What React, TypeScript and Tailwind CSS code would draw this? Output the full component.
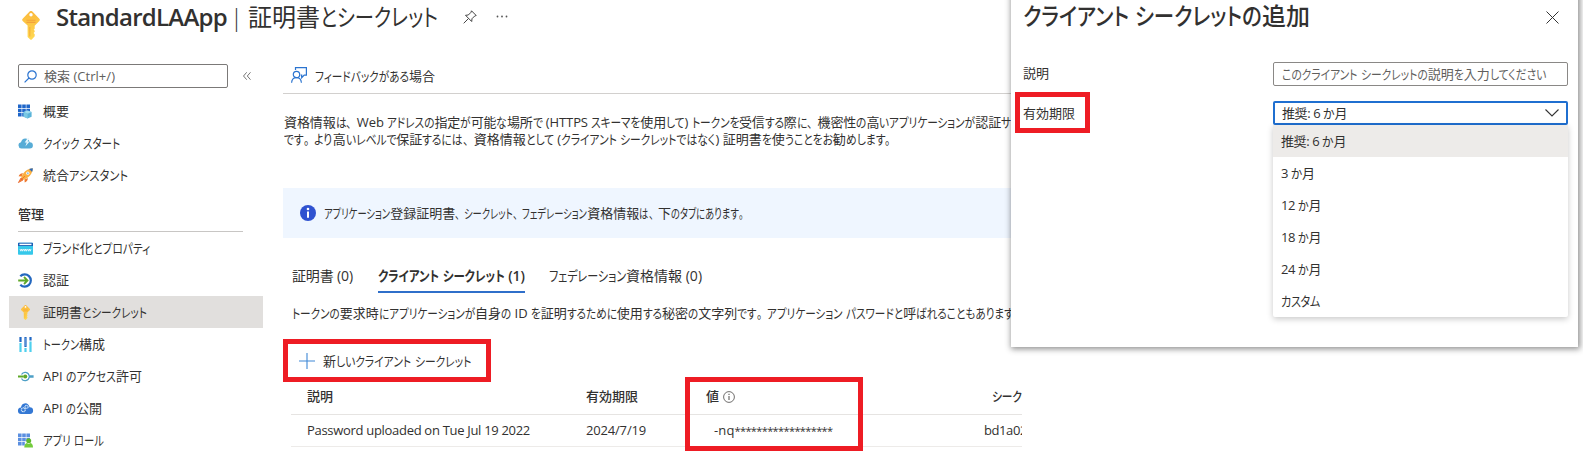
import { useLayoutEffect, useRef } from "react";
import type { ReactNode } from "react";
import clsx from "clsx";

const KANA = /([\u3001\u3002]|[\u3040-\u30ff]+)/;

/** One line of text set to a given width: kana are condensed, other scripts are tracked. */
function T({ w, children, className }: { w: number; children: string; className?: string }) {
  const ref = useRef<HTMLSpanElement>(null);
  useLayoutEffect(() => {
    const el = ref.current;
    if (!el) return;
    const kana = Array.from(el.querySelectorAll<HTMLElement>("[data-kana]"));
    kana.forEach((k) => {
      k.style.transform = "";
      k.style.marginRight = "";
    });
    el.style.letterSpacing = "";
    const total = el.getBoundingClientRect().width;
    const widths = kana.map((k) => k.getBoundingClientRect().width);
    const sum = widths.reduce((a, b) => a + b, 0);
    if (sum > 0) {
      const s = (w - (total - sum)) / sum;
      kana.forEach((k, i) => {
        k.style.transform = `scaleX(${s})`;
        k.style.marginRight = `${-(1 - s) * widths[i]}px`;
      });
    } else {
      el.style.letterSpacing = `${(w - total) / children.length}px`;
    }
  }, [w, children]);
  return (
    <span ref={ref} className={clsx("inline-block shrink-0 whitespace-pre", className)}>
      {children.split(KANA).map((part, i) =>
        i % 2 ? (
          <span
            key={i}
            data-kana
            className={clsx("inline-block origin-left", !/[\u3001\u3002]/.test(part) && "[font-feature-settings:'palt']")}
          >
            {part}
          </span>
        ) : (
          part
        ),
      )}
    </span>
  );
}

function KeyIcon({ className }: { className: string }) {
  return (
    <svg viewBox="0 0 18 29" className={className}>
      <defs>
        <linearGradient id="key" x1="0" y1="0" x2="0" y2="1">
          <stop offset="0" stopColor="#fbb93a" />
          <stop offset="1" stopColor="#ffd953" />
        </linearGradient>
      </defs>
      <path
        d="M7.6.6a2 2 0 0 1 2.8 0l6.7 6.8a2 2 0 0 1 0 2.9L12.700 14.700v3l-1 1 1 1.100v1l-1.100 1.200 1.100 1.200v2L9.800 28.400a1.100 1.100 0 0 1-1.600 0L5.600 26V14.600L.9 10.300a2 2 0 0 1 0-2.900Z"
        fill="url(#key)"
      />
      <circle cx="9" cy="3.800" r="1.700" fill="#fff" />
      <path d="M4.500 9.200h9M4.500 11.400h9" stroke="#f3a23c" strokeWidth="1.100" />
      <path d="M7.800 16v9.500" stroke="#f5ab38" strokeWidth="1" />
    </svg>
  );
}

const ic = "size-[15px] shrink-0 overflow-visible";

const OverviewIcon = () => (
  <svg viewBox="0 0 15 15" className={ic}>
    <path d="M0 .5h3.600v3.600H0zM4.200.5h3.600v3.600H4.200zM8.400.5H12v3.600H8.400zM0 4.700h3.600v3.600H0zM4.200 4.700h3.600v3.600H4.200zM8.400 4.700H12v3.600H8.400zM0 8.900h3.600v3.600H0zM4.200 8.900h2v3.600h-2z" fill="#1f66c9" />
    <path d="M9.600 6.500 13.600 8v4.800l-4 1.700-4-1.700V8z" fill="#5ab4d9" />
    <path d="m9.600 6.500 4 1.500-4 1.700-4-1.700z" fill="#9edcf0" />
    <path d="M9.600 9.700v4.800l-4-1.700V8z" fill="#7ac8e4" />
  </svg>
);
const QuickIcon = () => (
  <svg viewBox="0 0 15 15" className={ic}>
    <path d="M3.300 12.600A3.200 3.200 0 0 1 3 6.300 4.800 4.800 0 0 1 7.300 2.600c2.300 0 3.900 1.400 4.300 3.600A3.200 3.200 0 0 1 11.800 12.600z" fill="#57acd6" />
    <path d="m9.700 2-3 4.600h2L7.400 10.600l4.200-5.100H9.500L11.300 2z" fill="#e9f7fd" />
  </svg>
);
const RocketIcon = () => (
  <svg viewBox="0 0 15 15" className={ic}>
    <path d="M5 5.200C3 5 1.500 6.200.6 8.300l3 .2zM9.800 10c.2 2-1 3.600-3.100 4.500L6.500 11.400z" fill="#ee7a30" />
    <path d="M14.800.2c-4 .1-7.200 2-9.400 5L3 9.300 5.700 12l4.100-2.400c3-2.200 4.900-5.400 5-9.400z" fill="#fbb040" />
    <path d="M14.800.2c-1.300 0-2.500.2-3.700.7l3 3c.5-1.200.7-2.400.7-3.700z" fill="#2b69b8" />
    <circle cx="9.800" cy="5.200" r="1.600" fill="#fff" />
    <circle cx="9.800" cy="5.200" r="1" fill="#8fc0e6" />
    <path d="M7 8 2.800 12.200M3 10 .4 14.600 5 12z" stroke="#e8642c" fill="#f58a34" strokeWidth=".8" />
  </svg>
);
const BrandIcon = () => (
  <svg viewBox="0 0 15 15" className={ic}>
    <rect y="1.700" width="15" height="12" rx=".8" fill="#35c8ea" />
    <path d="M0 5V2.500a.8.800 0 0 1 .8-.8h13.400a.8.800 0 0 1 .8.800V5z" fill="#1c5fb4" />
    <path d="M1.500 2.700h12v1.400h-12z" fill="#fff" />
    <path d="m2 8 .9 2.200L3.800 8l.9 2.200L5.500 8m.5 0 .8 2.200L7.600 8l.8 2.200L9.200 8m.5 0 .8 2.200.9-2.200.8 2.200L13 8" fill="none" stroke="#fff" strokeWidth=".8" />
  </svg>
);
const AuthIcon = () => (
  <svg viewBox="0 0 15 15" className={ic}>
    <path d="M2.300 3.300a6.100 6.100 0 1 1 0 8.400" fill="none" stroke="#2468bf" strokeWidth="2.200" />
    <path d="M.2 7.500h9M6 4l3.500 3.500L6 11" fill="none" stroke="#5fa829" strokeWidth="1.800" />
  </svg>
);
const TokenIcon = () => (
  <svg viewBox="0 0 15 15" className={ic}>
    <path d="M2.500 0v5M12.500 0v3.500M7.500 0v10" stroke="#2168c4" strokeWidth="2.200" />
    <path d="M2.500 6v9M12.500 4.500V15M7.500 11v4" stroke="#4fd0ee" strokeWidth="2.200" />
    <path d="M7.500 1v8" stroke="#5e97dc" strokeWidth=".8" />
  </svg>
);
const ApiPermIcon = () => (
  <svg viewBox="0 0 15 15" className={ic}>
    <path d="M3.500 5.600a4.100 4.100 0 0 1 7.700 1.200H15v1.400h-3.800a4.100 4.100 0 0 1-7.700 1.200" fill="none" stroke="#4d9fc6" strokeWidth="1.200" />
    <path d="M0 7.500h5" stroke="#5fa829" strokeWidth="2" />
    <circle cx="7.200" cy="7.500" r="2.100" fill="#5fa829" />
  </svg>
);
const ApiExposeIcon = () => (
  <svg viewBox="0 0 15 15" className={ic}>
    <path d="M3.300 13A3.200 3.200 0 0 1 3 6.600 4.800 4.800 0 0 1 7.300 2.200c2.300 0 3.900 1.700 4.300 4A3.300 3.300 0 0 1 11.800 13z" fill="#3478d4" />
    <circle cx="5.300" cy="8.800" r="1.900" fill="none" stroke="#d5e8fa" strokeWidth="1.300" strokeDasharray="1.100 .4" />
    <circle cx="8.500" cy="5.900" r="1.500" fill="none" stroke="#d5e8fa" strokeWidth="1.200" strokeDasharray=".9 .4" />
  </svg>
);
const RolesIcon = () => (
  <svg viewBox="0 0 15 15" className={ic}>
    <path d="M0 .500h3.600v3.600H0zM4.200.500h3.600v3.600H4.200zM8.400.500H12v3.600H8.400zM0 4.700h3.600v3.600H0zM4.200 4.700h3.600v3.600H4.200zM8.400 4.700H12v3.600H8.400zM0 8.900h3.600v3.600H0zM4.200 8.900h2.600v3.600H4.200z" fill="#5b8fe0" />
    <path d="M6.300 14.400c0-2.600 1-4.200 2.600-4.500L10.700 11l1.800-1.100c1.600.3 2.500 1.900 2.500 4.500z" fill="#74cc3c" />
    <circle cx="10.700" cy="7.700" r="2.500" fill="#5cb82c" />
  </svg>
);

type Item = { label: string; w: number; icon: ReactNode; active?: boolean };

const top: Item[] = [
  { label: "概要", w: 26, icon: <OverviewIcon /> },
  { label: "クイック スタート", w: 77, icon: <QuickIcon /> },
  { label: "統合アシスタント", w: 85, icon: <RocketIcon /> },
];
const manage: Item[] = [
  { label: "ブランド化とプロパティ", w: 107, icon: <BrandIcon /> },
  { label: "認証", w: 26, icon: <AuthIcon /> },
  { label: "証明書とシークレット", w: 104, icon: <KeyIcon className="h-[15px] w-[15px] shrink-0" />, active: true },
  { label: "トークン構成", w: 62, icon: <TokenIcon /> },
  { label: "API のアクセス許可", w: 99, icon: <ApiPermIcon /> },
  { label: "API の公開", w: 59, icon: <ApiExposeIcon /> },
  { label: "アプリ ロール", w: 61, icon: <RolesIcon /> },
];

function NavItem({ item }: { item: Item }) {
  return (
    <li className={clsx("ml-[9px] flex h-8 w-[254px] items-center gap-[10px] pl-[9px]", item.active && "bg-[#e1dfdd]")}>
      {item.icon}
      <T w={item.w}>{item.label}</T>
    </li>
  );
}

function Header() {
  return (
    <header className="flex h-[64px] items-start pl-[22px]">
      <KeyIcon className="mt-[11px] h-[29px] w-[18px]" />
      <h1 className="ml-[16px] flex h-[32px] items-center text-[24px]">
        <T w={171} className="font-semibold">StandardLAApp</T>
        <span className="mr-[5px] ml-[3px] font-light">|</span>
        <T w={190}>証明書とシークレット</T>
      </h1>
      <svg viewBox="0 0 14 14" className="mt-[10px] ml-[25px] size-[14px]" fill="none" stroke="#444" strokeWidth="1">
        <path d="m8.500.8 4.700 4.700-1.500.5-2.700 2.700-.3 2.800-6.200-6.200 2.800-.3L8 2.300zM5.500 8.500.7 13.300" />
      </svg>
      <svg viewBox="0 0 12 3" className="mt-[15px] ml-[19px] h-[3px] w-[12px]" fill="#555">
        <circle cx="1.500" cy="1.500" r=".9" />
        <circle cx="6" cy="1.500" r=".9" />
        <circle cx="10.500" cy="1.500" r=".9" />
      </svg>
    </header>
  );
}

function Sidebar() {
  return (
    <nav className="w-[283px] shrink-0">
      <div className="flex h-[24px] items-center pl-[18px]">
        <div className="flex h-[24px] w-[210px] items-center rounded-[2px] border border-[#7b7978] pl-[5px]">
          <svg viewBox="0 0 13 13" className="size-[13px]" fill="none" stroke="#2b74d0" strokeWidth="1.200">
            <circle cx="8" cy="5" r="4.200" />
            <path d="M5 8 .6 12.400" />
          </svg>
          <T w={71} className="ml-[7px] text-[#605e5c]">検索 (Ctrl+/)</T>
        </div>
        <svg viewBox="0 0 8 8" className="ml-[15px] size-[8px]" fill="none" stroke="#666" strokeWidth=".9">
          <path d="M3.700.3 0.500 4l3.200 3.700M7.500.3 4.300 4l3.200 3.700" />
        </svg>
      </div>
      <ul className="mt-[7px]">
        {top.map((i) => (
          <NavItem key={i.label} item={i} />
        ))}
      </ul>
      <h2 className="ml-[18px] flex h-[41px] w-[225px] items-end border-b border-[#c8c6c4] pb-[7px]">
        <T w={26} className="font-medium">管理</T>
      </h2>
      <ul>
        {manage.map((i) => (
          <NavItem key={i.label} item={i} />
        ))}
      </ul>
    </nav>
  );
}

function Main() {
  return (
    <main className="w-[739px] shrink-0 overflow-hidden">
      <div className="flex h-[30px] items-start border-b border-[#d2d0ce] pl-[8px]">
        <svg viewBox="0 0 16 16" className="mt-[3px] size-[16px]" fill="none" stroke="#2b74d0" strokeWidth="1.200">
          <path d="M4.500 3V.7h10.900v7.500h-2.200l-2.500 2.500V8.200h-1" />
          <circle cx="5.500" cy="7.500" r="3.200" />
          <path d="M.6 15.700c.2-3 2.300-5 4.900-5s4.700 2 4.900 5" />
        </svg>
        <div className="ml-[8px] flex h-[24px] items-center">
          <T w={120}>フィードバックがある場合</T>
        </div>
      </div>
      <div className="mt-[20px] flex flex-col items-start pl-[1px] leading-[17px]">
        <T w={727} className="tracking-[-0.1px]">資格情報は、Web アドレスの指定が可能な場所で (HTTPS スキーマを使用して) トークンを受信する際に、機密性の高いアプリケーションが認証サ</T>
        <T w={612}>です。より高いレベルで保証するには、資格情報として (クライアント シークレットではなく) 証明書を使うことをお勧めします。</T>
      </div>
      <div className="mt-[40px] flex h-[50px] items-center bg-[#eff6ff] pl-[17px]">
        <svg viewBox="0 0 16 16" className="size-[16px]">
          <circle cx="8" cy="8" r="8" fill="#2f52d0" />
          <circle cx="8" cy="4" r="1.300" fill="#fff" />
          <path d="M8 6.500v6.300" stroke="#fff" strokeWidth="2" />
        </svg>
        <T w={424} className="ml-[8px]">アプリケーション登録証明書、シークレット、フェデレーション資格情報は、下のタブにあります。</T>
      </div>
      <div className="mt-[20px] flex h-[36px] items-stretch gap-[25px] pl-[9px] text-[14px]">
        <div className="flex h-[34px] items-center">
          <T w={61}>証明書 (0)</T>
        </div>
        <div className="flex h-[35px] items-center border-b-2 border-[#2f6fca] pt-[1px]">
          <T w={147} className="font-semibold">クライアント シークレット (1)</T>
        </div>
        <div className="-ml-[1px] flex h-[34px] items-center">
          <T w={153}>フェデレーション資格情報 (0)</T>
        </div>
      </div>
      <div className="mt-[8px] flex h-[22px] items-center pl-[9px]">
        <T w={722}>トークンの要求時にアプリケーションが自身の ID を証明するために使用する秘密の文字列です。アプリケーション パスワードと呼ばれることもあります</T>
      </div>
      <div className="mt-[15px] flex h-[43px] w-[208px] items-center border-[5px] border-[#ee1c24] pl-[11px]">
        <svg viewBox="0 0 16 16" className="size-[16px]" stroke="#3f88d6" strokeWidth="1.100">
          <path d="M8 0v16M0 8h16" />
        </svg>
        <T w={148} className="mt-[2px] ml-[8px]">新しいクライアント シークレット</T>
      </div>
      <div className="relative ml-[8px] w-[731px]">
        <div className="flex h-[33px] items-center border-b border-[#e6e4e2] pb-[4px] pl-[16px] font-medium">
          <div className="w-[279px] shrink-0"><T w={26}>説明</T></div>
          <div className="w-[120px] shrink-0"><T w={52}>有効期限</T></div>
          <div className="flex w-[286px] shrink-0 items-center">
            <T w={13}>値</T>
            <svg viewBox="0 0 12 12" className="mt-[2px] ml-[4px] size-[12px]" fill="none" stroke="#605e5c">
              <circle cx="6" cy="6" r="5.400" strokeWidth=".9" />
              <path d="M6 5v4M6 2.800v1.200" strokeWidth="1.100" />
            </svg>
          </div>
          <T w={30}>シーク</T>
        </div>
        <div className="flex h-[32px] items-center border-b border-[#edebe9] pl-[16px]">
          <div className="w-[279px] shrink-0"><T w={223}>Password uploaded on Tue Jul 19 2022</T></div>
          <div className="w-[128px] shrink-0"><T w={60}>2024/7/19</T></div>
          <div className="flex w-[270px] shrink-0 items-center">
            <T w={20.5}>-nq</T>
            <T w={98} className="text-[11px]">******************</T>
          </div>
          <T w={43}>bd1a02</T>
        </div>
        <div className="absolute top-[-5px] left-[394px] h-[74px] w-[178px] border-[5px] border-[#ee1c24]" />
      </div>
    </main>
  );
}

const options: { label: string; w: number }[] = [
  { label: "推奨: 6 か月", w: 65 },
  { label: "3 か月", w: 33.5 },
  { label: "12 か月", w: 40 },
  { label: "18 か月", w: 40 },
  { label: "24 か月", w: 40 },
  { label: "カスタム", w: 39 },
];

function SecretPanel() {
  return (
    <aside className="absolute top-[-10px] left-[1011px] h-[357px] w-[567px] bg-white pt-[10px] pl-[12px] shadow-[1px_1px_6px_1px_rgba(0,0,0,0.45)]">
      <div className="flex h-[34px] items-center justify-between pr-[19px]">
        <T w={287} className="-mt-[3px] text-[24px] font-medium">クライアント シークレットの追加</T>
        <svg viewBox="0 0 13 13" className="size-[13px]" stroke="#333" strokeWidth="1">
          <path d="m.5.500 12 12M12.500.500l-12 12" />
        </svg>
      </div>
      <div className="mt-[28px] flex h-[24px] items-center">
        <div className="w-[250px] pb-[1px]"><T w={26}>説明</T></div>
        <div className="flex h-[24px] w-[295px] items-center rounded-[2px] border border-[#8a8886] pl-[8px] text-[#605e5c]">
          <T w={264}>このクライアント シークレットの説明を入力してください</T>
        </div>
      </div>
      <div className="mt-[15px] flex h-[24px] items-center">
        <div className="relative flex h-[24px] w-[250px] items-center">
          <T w={52}>有効期限</T>
          <div className="absolute top-[-9px] left-[-8px] h-[41px] w-[75px] border-[5px] border-[#ee1c24]" />
        </div>
        <div className="relative h-[24px] w-[295px]">
          <div className="flex h-[24px] items-center justify-between rounded-[2px] border-2 border-[#1f6fd0] pr-[7px] pl-[7px]">
            <T w={65} className="tracking-[-0.4px]">推奨: 6 か月</T>
            <svg viewBox="0 0 14 8" className="h-[8px] w-[14px]" fill="none" stroke="#333" strokeWidth="1.100">
              <path d="m.5.500 6.500 6.500L13.500.500" />
            </svg>
          </div>
          <ul className="absolute top-[24px] left-0 w-[295px] rounded-b-[2px] bg-white shadow-[0_2px_6px_rgba(0,0,0,0.22)]">
            {options.map((o, i) => (
              <li key={o.label} className={clsx("flex h-8 items-center pl-[8px]", i === 0 && "bg-[#edebe9]")}>
                <T w={o.w} className="tracking-[-0.4px]">{o.label}</T>
              </li>
            ))}
          </ul>
        </div>
      </div>
    </aside>
  );
}

export default function App() {
  return (
    <div className="relative h-[462px] w-[1583px] overflow-hidden bg-white font-['Open_Sans','Noto_Sans_CJK_JP',sans-serif] text-[13px] leading-[19px] text-[#323130]">
      <Header />
      <div className="flex">
        <Sidebar />
        <Main />
      </div>
      <SecretPanel />
    </div>
  );
}
